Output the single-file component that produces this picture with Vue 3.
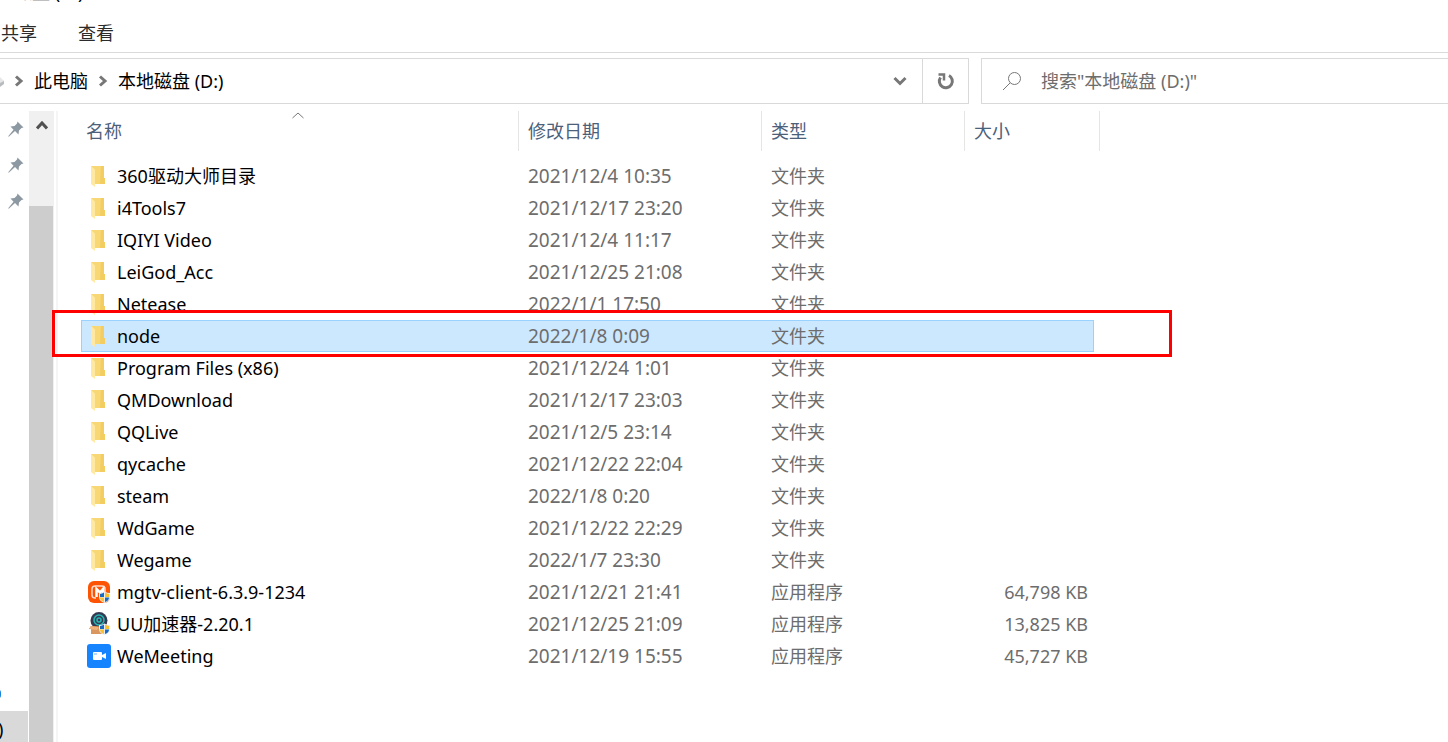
<script setup>
import { ref } from 'vue'

const files = [
  { name: '360驱动大师目录', date: '2021/12/4 10:35' },
  { name: 'i4Tools7', date: '2021/12/17 23:20' },
  { name: 'IQIYI Video', date: '2021/12/4 11:17' },
  { name: 'LeiGod_Acc', date: '2021/12/25 21:08' },
  { name: 'Netease', date: '2022/1/1 17:50' },
  { name: 'node', date: '2022/1/8 0:09' },
  { name: 'Program Files (x86)', date: '2021/12/24 1:01' },
  { name: 'QMDownload', date: '2021/12/17 23:03' },
  { name: 'QQLive', date: '2021/12/5 23:14' },
  { name: 'qycache', date: '2021/12/22 22:04' },
  { name: 'steam', date: '2022/1/8 0:20' },
  { name: 'WdGame', date: '2021/12/22 22:29' },
  { name: 'Wegame', date: '2022/1/7 23:30' },
  { name: 'mgtv-client-6.3.9-1234', date: '2021/12/21 21:41', app: 'mgtv', size: '64,798 KB' },
  { name: 'UU加速器-2.20.1', date: '2021/12/25 21:09', app: 'uu', size: '13,825 KB' },
  { name: 'WeMeeting', date: '2021/12/19 15:55', app: 'meeting', size: '45,727 KB' },
]
const selected = ref('node')
const query = ref('')
</script>

<template>
  <div class="explorer">
    <header class="title"><span>磁盘 (D:)</span></header>
    <nav class="ribbon">
      <button type="button">共享</button>
      <button type="button">查看</button>
    </nav>
    <div class="location">
      <div class="address">
        <svg class="drive" viewBox="0 0 4 12" aria-hidden="true">
          <path d="M0 4 4 6V9L0 12Z" fill="#b9bcbf" /><path d="M0 2 4 6 0 8Z" fill="#e6e7e8" />
        </svg>
        <svg class="crumb-arrow" viewBox="0 0 10 12" aria-hidden="true"><path d="M2 1.500 7 6 2 10.500" /></svg>
        <a href="#">此电脑</a>
        <svg class="crumb-arrow" viewBox="0 0 10 12" aria-hidden="true"><path d="M2 1.500 7 6 2 10.500" /></svg>
        <a href="#">本地磁盘 (D:)</a>
        <button class="history" type="button" aria-label="以前的位置">
          <svg viewBox="0 0 14 10" aria-hidden="true"><path d="M1.500 2 7 7.500 12.500 2" /></svg>
        </button>
        <button class="refresh" type="button" aria-label="刷新">
          <svg viewBox="0 0 18 18" aria-hidden="true">
            <path d="M12 3.500A6.500 6.500 0 1 1 3.500 5.500" /><path d="M1.500 2.500H7V8.500" stroke-width="2.500" />
          </svg>
        </button>
      </div>
      <label class="search">
        <svg viewBox="0 0 20 20" aria-hidden="true"><circle cx="12.500" cy="7.500" r="6" /><path d="M8.200 11.800 1 19" /></svg>
        <input v-model="query" type="text" aria-label="搜索" placeholder='搜索"本地磁盘 (D:)"'>
      </label>
    </div>
    <div class="body">
      <aside class="sidebar">
        <svg v-for="n in 3" :key="n" class="pin" viewBox="0 0 16 16" aria-hidden="true">
          <path d="M9.500 0.500 15.500 6.500 13.500 7 11 9.500 10.500 13.500 7 10 1 15.500 0 15.500 5.500 8.800 2.500 5.500 6.500 5 9 2.500Z" />
        </svg>
        <div class="drive-item"><i></i><span>)</span></div>
      </aside>
      <div class="scrollbar">
        <button type="button" aria-label="向上滚动">
          <svg viewBox="0 0 12 9" aria-hidden="true"><path d="M1 7.500 6 2 11 7.500" /></svg>
        </button>
        <div class="thumb"></div>
      </div>
      <main class="list">
        <table>
          <colgroup><col class="c-name"><col class="c-date"><col class="c-type"><col class="c-size"><col class="c-end"></colgroup>
          <thead>
            <tr>
              <th class="sorted">名称
                <svg viewBox="0 0 12 7" aria-hidden="true"><path d="M0.500 6 6 1 11.500 6" /></svg>
              </th>
              <th>修改日期</th>
              <th>类型</th>
              <th colspan="2">大小</th>
            </tr>
          </thead>
          <tbody>
            <tr v-for="f in files" :key="f.name" :class="{ selected: f.name === selected }" @click="selected = f.name">
              <td>
                <div class="name">
                  <svg v-if="!f.app" class="icon" viewBox="0 0 24 24" aria-hidden="true">
                    <path d="M4 2H17V14H18V20H4Z" fill="#f8d775" />
                    <path d="M14 2H17V14H18V20H13Z" fill="#f3cc62" />
                    <path d="M4 2 8 5.500V23L4 20Z" fill="#ffe9a2" />
                  </svg>
                  <svg v-else-if="f.app === 'mgtv'" class="icon" viewBox="0 0 24 24" aria-hidden="true">
                    <rect x="1" y="1" width="22" height="22" rx="6" fill="#fc5404" />
                    <path d="M9 18H8Q5 18 5 15V9Q5 6 8 6H15Q18 6 18 9V12" fill="none" stroke="#ffd9c8" stroke-width="1.500" />
                    <path d="M9.500 17V9L13 12.500 16 9V13" fill="none" stroke="#fff" stroke-width="2.500" />
                    <path d="M12 13Q15 13 17.500 11.500 20 13 23 13V17Q23 21 17.500 23 12 21 12 17Z" fill="#e8eef4" />
                    <path d="M17 12.500V17H13V14Q15 13.800 17 12.500ZM18 17.500H22Q22 20.500 18 22Z" fill="#1769c2" />
                    <path d="M18 12.500Q20 13.800 22 14V17H18ZM13 17.500H17V22Q13 20.500 13 17.500Z" fill="#fbc02d" />
                  </svg>
                  <svg v-else-if="f.app === 'uu'" class="icon" viewBox="0 0 24 24" aria-hidden="true">
                    <circle cx="12" cy="8.500" r="8.500" fill="#353a54" />
                    <circle cx="12" cy="8" r="5" fill="none" stroke="#26b7b3" stroke-width="1.500" />
                    <circle cx="12" cy="8" r="2" fill="none" stroke="#26b7b3" stroke-width="1.500" />
                    <path d="M4 14H20L22 17H2Z" fill="#b8733f" />
                    <path d="M4 16H20V22H4Z" fill="#d9975f" /><path d="M4 14 12 15 10 18 2 17Z" fill="#efb27c" />
                    <path d="M12 13Q15 13 17.500 11.500 20 13 23 13V17Q23 21 17.500 23 12 21 12 17Z" fill="#e8eef4" />
                    <path d="M17 12.500V17H13V14Q15 13.800 17 12.500ZM18 17.500H22Q22 20.500 18 22Z" fill="#1769c2" />
                    <path d="M18 12.500Q20 13.800 22 14V17H18ZM13 17.500H17V22Q13 20.500 13 17.500Z" fill="#fbc02d" />
                  </svg>
                  <svg v-else class="icon" viewBox="0 0 24 24" aria-hidden="true">
                    <rect width="24" height="24" rx="3" fill="#1684ff" />
                    <rect x="6" y="8" width="9" height="8" rx="1" fill="#fff" />
                    <path d="M15 11 19 9V15L15 13Z" fill="#fff" />
                    <path d="M7 10H10" stroke="#6db2ff" />
                  </svg>
                  <span>{{ f.name }}</span>
                </div>
              </td>
              <td class="date">{{ f.date }}</td>
              <td>{{ f.app ? '应用程序' : '文件夹' }}</td>
              <td class="size">{{ f.size }}</td>
            </tr>
          </tbody>
        </table>
      </main>
      <div class="highlight"></div>
    </div>
  </div>
</template>

<style>
body { margin: 0; background: #fff; }
</style>

<style scoped>
.explorer {
  display: flex; flex-direction: column; height: 100vh; overflow: hidden;
  font: 18px/24px "Noto Sans", "Noto Sans CJK SC", sans-serif; color: #000;
}
svg { display: block; flex: none; fill: none; stroke: none; }
button { border: 0; padding: 0; background: none; font: inherit; color: inherit; }
a { color: inherit; text-decoration: none; }
.title { flex: none; display: flex; align-items: flex-end; height: 3px; padding-left: 14px; overflow: hidden; line-height: 22px; }
.ribbon { flex: none; display: flex; align-items: flex-start; gap: 41px; height: 49px; padding-left: 1px; border-bottom: 1px solid #dadada; color: #2b2b2b; }
.ribbon button { height: 60px; }
.location { flex: none; display: flex; gap: 12px; height: 46px; padding-top: 5px; }
.address { box-sizing: border-box; display: flex; align-items: center; flex: 0 0 969px; border: 1px solid #d9d9d9; border-left: 0; }
.drive { width: 4px; height: 12px; }
.crumb-arrow { width: 10px; height: 12px; margin: 0 10px; stroke: #777; stroke-width: 3px; }
.history { margin-left: auto; width: 44px; height: 44px; display: grid; place-items: center; }
.history svg { width: 14px; height: 10px; stroke: #777; stroke-width: 3px; }
.refresh { width: 46px; height: 44px; border-left: 1px solid #d9d9d9; display: grid; place-items: center; }
.refresh svg { width: 18px; height: 18px; stroke: #777; stroke-width: 3px; }
.search { flex: 1; display: flex; align-items: center; gap: 19px; padding-left: 20px; border: 1px solid #d9d9d9; border-right: 0; }
.search svg { width: 20px; height: 20px; stroke: #777; }
.search input { flex: 1; min-width: 0; border: 0; padding: 0; outline: 0; background: none; font: inherit; }
.search input::placeholder { color: #6d6d6d; opacity: 1; }
.body { position: relative; flex: 1; display: flex; min-height: 0; padding-top: 7px; }
.sidebar { display: flex; flex-direction: column; gap: 20px; width: 28px; margin-right: 1px; padding-top: 10px; }
.pin { width: 16px; height: 16px; margin-left: 8px; fill: #8d99a2; }
.drive-item { display: flex; align-items: center; height: 31px; margin-top: auto; background: #d9d9d9; position: relative; }
.drive-item i { position: absolute; top: -22px; left: -7px; width: 8px; height: 10px; border-radius: 4px; background: #1683d8; }
.drive-item span { margin-left: -2px; padding-top: 4px; }
.scrollbar { display: flex; flex-direction: column; width: 25px; background: #f0f0f0; }
.scrollbar button { height: 95px; display: flex; justify-content: center; padding-top: 10px; }
.scrollbar button svg { width: 12px; height: 9px; stroke: #505050; stroke-width: 3px; }
.thumb { flex: 1; margin-right: 1px; background: #cdcdcd; }
.list { flex: 1; margin-left: 2px; padding-left: 23px; border-left: 2px solid #f5f5f5; }
table { width: 1019px; table-layout: fixed; border-collapse: separate; border-spacing: 0; }
.c-name { width: 438px; } .c-date { width: 243px; } .c-type { width: 203px; } .c-size { width: 129px; } .c-end { width: 6px; }
th { height: 40px; padding: 0 0 0 9px; border-right: 1px solid #e5e5e5; text-align: left; font-weight: inherit; color: #4c607a; position: relative; }
th.sorted { padding-left: 5px; }
.sorted svg { position: absolute; left: 50%; top: 1px; margin-left: -8px; width: 12px; height: 7px; stroke: #777; }
tbody::before { content: ""; display: table-row; height: 9px; }
td { height: 32px; box-sizing: border-box; padding: 0 0 0 9px; color: #6d6d6d; white-space: nowrap; border: 1px solid transparent; border-width: 1px 0; }
td:first-child { padding-left: 5px; color: #000; border-left-width: 1px; }
td.size { padding: 0 5px 0 0; text-align: right; border-right-width: 1px; }
.date { font-size: 19px; }
.name { display: flex; align-items: center; gap: 6px; }
.icon { width: 24px; height: 24px; }
.selected td { background: #cce8ff; border-color: #99d1ff; }
.highlight { position: absolute; left: 52px; top: 206px; width: 1114px; height: 41px; border: 3px solid #f00; pointer-events: none; }
</style>
